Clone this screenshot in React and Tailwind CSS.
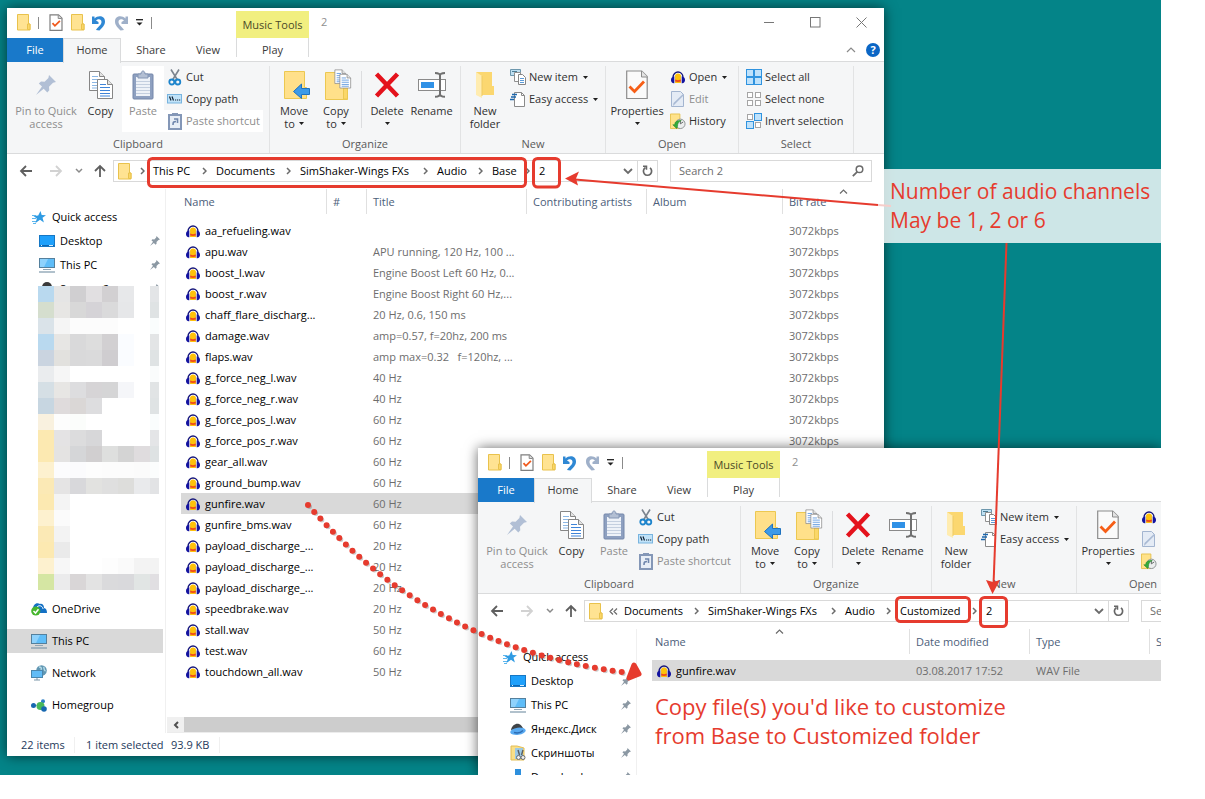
import React from 'react';

const baseFiles = [
  { name: 'aa_refueling.wav', title: '' },
  { name: 'apu.wav', title: 'APU running, 120 Hz, 100 ...' },
  { name: 'boost_l.wav', title: 'Engine Boost Left 60 Hz, 0...' },
  { name: 'boost_r.wav', title: 'Engine Boost Right 60 Hz,...' },
  { name: 'chaff_flare_discharg...', title: '20 Hz, 0.6, 150 ms' },
  { name: 'damage.wav', title: 'amp=0.57, f=20hz, 200 ms' },
  { name: 'flaps.wav', title: 'amp max=0.32   f=120hz, ...' },
  { name: 'g_force_neg_l.wav', title: '40 Hz' },
  { name: 'g_force_neg_r.wav', title: '40 Hz' },
  { name: 'g_force_pos_l.wav', title: '60 Hz' },
  { name: 'g_force_pos_r.wav', title: '60 Hz' },
  { name: 'gear_all.wav', title: '60 Hz' },
  { name: 'ground_bump.wav', title: '60 Hz' },
  { name: 'gunfire.wav', title: '60 Hz', selected: true },
  { name: 'gunfire_bms.wav', title: '60 Hz' },
  { name: 'payload_discharge_...', title: '20 Hz' },
  { name: 'payload_discharge_...', title: '20 Hz' },
  { name: 'payload_discharge_...', title: '20 Hz' },
  { name: 'speedbrake.wav', title: '20 Hz' },
  { name: 'stall.wav', title: '50 Hz' },
  { name: 'test.wav', title: '60 Hz' },
  { name: 'touchdown_all.wav', title: '50 Hz' },
];

// rows beyond this one sit behind the second window
const lastVisibleRate = 11;

const W = '#ffffff';
const mosaic = [
  ['#b9d9ef', '#e5e5e5', '#d0cfd1', '#e1dfe1', '#d2d0d2', '#e7e8ea', W, '#e3e5e7'],
  ['#d5dece', '#e7e6e4', '#d8d8d8', '#d5d3d7', '#dadadb', '#e6e7e9', W, '#dfe3e4'],
  ['#dae3e9', '#f5f5f5', '#fcfcfc', '#fcfcfc', '#fcfcfc', W, W, '#fafdfd'],
  ['#b9d9ef', '#e7e6e4', '#d9d9da', '#dddddd', '#d2d0d2', '#fafcff', W, '#e3e5e6'],
  ['#cad4e0', '#e2e1de', '#d9d9da', '#dadadb', '#cfcdd0', '#fafcff', W, '#dfe3e4'],
  ['#eaecee', '#f6f6f6', W, W, W, W, W, '#fafcfc'],
  ['#d5dfe5', '#e7e6e4', '#dddddf', '#d6d4d6', '#d5d5d6', '#f5f6f9', W, '#e1e4e5'],
  ['#c7d6e1', '#dfdbdc', '#dad7d6', '#dddddf', W, W, W, '#dfe3e4'],
  ['#f9f1df', '#fdfdfd', '#fbfdfb', W, W, W, W, '#fafdfd'],
  ['#fce9b1', '#e4e3e4', '#dcdcdd', '#d7d7d9', W, W, W, '#e4e5e7'],
  ['#fce9b1', '#e4e3e2', '#d5d6d8', '#d1cfd0', '#dedfde', '#d4d4d4', '#dfdcde', '#dee2e3'],
  ['#fdf1cf', '#fcfcfd', '#fbfbfd', '#fdfdfd', '#fcfcfc', '#fcfcfc', '#fbfbfb', '#fbfdfd'],
  ['#fbe9b5', '#e5e4e4', '#d8d8db', '#e2e2e0', '#dfdfdf', '#dddddb', '#e9eaec', '#e2e3e5'],
  ['#fce9b1', '#f4f4f4', W, W, W, W, W, W],
  ['#fdf1cf', '#fbfbfb', W, W, W, W, W, W],
  ['#fbe9b5', '#f3f3f3', W, W, W, W, W, W],
  ['#fce9b1', '#eaeaea', W, W, W, W, W, W],
  ['#fdf1cf', '#f7f7f7', W, W, '#fdfdfd', '#fafafa', '#f3f3f3', '#f3f3f3'],
  ['#d5e6a3', '#ebebec', '#d9d6d7', '#e3e3e3', '#dadadc', '#d9d9dc', '#e1e5e4', '#e1dfe2'],
];

/* ---------- icons ---------- */

const FolderTiny = () => (
  <svg width="14" height="17" viewBox="0 0 14 17">
    <path d="M.5.5h11v9.5h1.5v6H.5z" fill="#ffe392" stroke="#e9c24c" />
    <path d="M10.5 15.5V10h2.500v5.500z" fill="#fbd768" stroke="#e9c24c" />
  </svg>
);

const CheckDocTiny = () => (
  <svg width="14" height="17" viewBox="0 0 14 17">
    <path d="M1 .8h8.500l3.500 3.500v12H1z" fill="#fff" stroke="#7f7f7f" strokeWidth="1.200" />
    <path d="M9.200 1v3.500h3.500" fill="#ddd" stroke="#8a8a8a" />
    <path d="M3.500 9.200l2.400 2.600 5-5" fill="none" stroke="#f0591c" strokeWidth="1.800" />
  </svg>
);

const Undo = ({ color, flip }) => (
  <svg width="14" height="16" viewBox="0 0 14 16" className={flip ? '-scale-x-100' : ''}>
    <path d="M0 1.500h2.500v2C6 0 13 .5 13 6.500c0 4-3 6-5.500 9L4 15c2-3.500 5.500-5 5.500-8 0-3.500-3.500-3.500-5.500-1.500l2.500 1.500V9H0z" fill={color} />
  </svg>
);

const Caret = () => (
  <svg width="5" height="3" viewBox="0 0 5 3" className="shrink-0">
    <path d="M0 0h5L2.500 3z" fill="#1f1f1f" />
  </svg>
);

const PinShape = ({ size, color }) => (
  <svg width={size} height={size} viewBox="0 0 20 20" className="shrink-0">
    <path d="M13 0l7 7-3 .8-4 4 .3 3.400-2 2.200-3.600-3.600L0 20l6-8.400L2.800 8.400l2.200-2 3.600.4 3.800-3.800z" fill={color} />
  </svg>
);

const PageLines = ({ x, y, line }) => (
  <g transform={`translate(${x} ${y})`}>
    <path d="M.5.5h10l5 5v14H.5z" fill="#fff" stroke="#868686" />
    <path d="M10.500.5v5h5" fill="#e3e3e3" stroke="#868686" />
    <path d="M3 5.500h6M3 8.500h10M3 11.500h10M3 14.500h10M3 17h10" stroke={line} />
  </g>
);

const CopyBig = () => (
  <svg width="26" height="30" viewBox="0 0 26 30">
    <PageLines x={1} y={1} line="#8cb7e4" />
    <PageLines x={9} y={9} line="#3f84d8" />
  </svg>
);

const PasteBig = () => (
  <svg width="22" height="30" viewBox="0 0 22 30">
    <rect x="1" y="4" width="20" height="25" rx="1" fill="#8ea0c0" stroke="#7587aa" />
    <rect x="4" y="7" width="14" height="19" fill="#eef2f8" />
    <path d="M4 11.500h14M4 14.500h14M4 17.500h14M4 20.500h14M4 23.500h14" stroke="#c4cfdf" />
    <path d="M6 4h3c0-4 4-4 4 0h3v4H6z" fill="#b3bfd3" stroke="#8496b4" />
  </svg>
);

const Scissors = () => (
  <svg width="14" height="17" viewBox="0 0 14 17">
    <path d="M3 .5L9.500 11M11 .5L4.500 11" stroke="#7c858f" strokeWidth="1.600" />
    <circle cx="3.800" cy="13" r="2.500" fill="none" stroke="#1d84cc" strokeWidth="1.800" />
    <circle cx="9.800" cy="13" r="2.500" fill="none" stroke="#1d84cc" strokeWidth="1.800" />
  </svg>
);

const CopyPath = () => (
  <svg width="16" height="10" viewBox="0 0 16 10">
    <rect x=".5" y=".5" width="14" height="8.500" fill="#c0e2f8" stroke="#78b4df" />
    <path d="M2.500 2.500l1.500 4M5 2.500l1.500 4" stroke="#123" strokeWidth="1.200" />
    <path d="M8 6h1.200M10 6h1.200M12 6h1.200" stroke="#123" strokeWidth="1.200" />
  </svg>
);

const PasteShortcut = () => (
  <svg width="14" height="17" viewBox="0 0 14 17">
    <rect x="1" y="2" width="12" height="14" fill="#e8eef6" stroke="#8497b7" strokeWidth="2" />
    <rect x="4" y="0" width="6" height="3" fill="#8497b7" />
    <path d="M5 12c0-3 .5-3.500 3-3.500M6 6h3.500v4" fill="none" stroke="#6f86ac" strokeWidth="1.600" />
  </svg>
);

const MoveTo = () => (
  <svg width="27" height="30" viewBox="0 0 27 30">
    <path d="M1.500 1.500h20v16h2v11h-22z" fill="#ffe08a" stroke="#ecc851" />
    <path d="M26.500 18.500v6h-8v4l-8-7 8-7.500v4.500z" fill="#3c9ae8" stroke="#1f72bf" />
  </svg>
);

const CopyTo = () => (
  <svg width="28" height="32" viewBox="0 0 28 32">
    <path d="M1.500 3.500h18v17h4v10h-22z" fill="#ffe08a" stroke="#ecc851" />
    <path d="M19.500 30V19h4v11z" fill="#fbd768" stroke="#ecc851" />
    <g transform="translate(10.500 .5) scale(.72)"><PageLines x={0} y={0} line="#3f84d8" /></g>
    <g transform="translate(15.500 5) scale(.72)"><PageLines x={0} y={0} line="#3f84d8" /></g>
  </svg>
);

const DeleteBig = () => (
  <svg width="26" height="26" viewBox="0 0 26 26">
    <path d="M2.500 2l21 22M23.500 2l-21 22" stroke="#e4121c" strokeWidth="4.500" />
  </svg>
);

const RenameBig = () => (
  <svg width="28" height="28" viewBox="0 0 28 28">
    <rect x=".5" y="8.500" width="27" height="11" fill="#fff" stroke="#8a8a8a" />
    <rect x="3" y="11" width="13" height="6" fill="#3091e6" />
    <path d="M17 2c3 0 5 .5 5 2.500V23c0 2-2 2.800-5 2.800M27 2c-3 0-5 .5-5 2.500V23c0 2 2 2.800 5 2.800" fill="none" stroke="#707070" strokeWidth="2" />
  </svg>
);

const NewFolderBig = () => (
  <svg width="20" height="28" viewBox="0 0 20 28">
    <path d="M1 1h16v14h2v9H6z" fill="#fbd770" />
    <path d="M1 1l6 4v22l-6-3z" fill="#ffecb0" />
    <path d="M7 5v20" stroke="#efcb62" />
  </svg>
);

const NewItem = () => (
  <svg width="16" height="16" viewBox="0 0 16 16">
    <path d="M.5.5h10v6H.5z" fill="#bfe0f2" stroke="#6d97ad" />
    <path d="M2 2.500h5" stroke="#4b7d96" />
    <path d="M4.500 3.500h6v9h-6z" fill="#fff" stroke="#909090" />
    <path d="M8.500 5.500h4l3 3v7h-7z" fill="#fff" stroke="#868686" />
    <path d="M10 9.500h4M10 11.500h4M10 13.500h4" stroke="#5c9bd8" />
  </svg>
);

const EasyAccess = () => (
  <svg width="16" height="16" viewBox="0 0 16 16">
    <path d="M4.500 1.500h7l3 3v11h-10z" fill="#fff" stroke="#8a8a8a" />
    <path d="M11.500 1.500v3h3" fill="none" stroke="#8a8a8a" />
    <path d="M2 3.500h5M1 6h5M0 8.500h4" stroke="#1c67ad" strokeWidth="1.300" />
  </svg>
);

const PropertiesBig = () => (
  <svg width="22" height="30" viewBox="0 0 22 30">
    <path d="M.7 1h15l5.500 5.500V28.500H.7z" fill="#fafafa" stroke="#8c8c8c" strokeWidth="1.200" />
    <path d="M15.500 1v6h6" fill="#e3e3e3" stroke="#8c8c8c" />
    <path d="M3.500 16.500l5 5 9.500-10" fill="none" stroke="#f65e16" strokeWidth="2.800" />
  </svg>
);

const Audacity = () => (
  <svg width="14" height="13" viewBox="0 0 14 13" className="shrink-0">
    <path d="M4 12V5c0-1.500 1.300-2.500 3-2.500S10 3.500 10 5v7z" fill="#ffc20a" />
    <path d="M4 8.500l3 .7 3-.7v2l-3 .5-3-.5z" fill="#f04a18" />
    <path d="M2 6.500C2-.8 12-.8 12 6.500" fill="none" stroke="#15157a" strokeWidth="1.400" />
    <path d="M3.300 5.500v6.800C1.200 12.600 0 11 0 9s1.200-3.500 3.300-3.500z" fill="#1313a0" />
    <path d="M10.700 5.500v6.800C12.800 12.600 14 11 14 9s-1.200-3.500-3.300-3.500z" fill="#1313a0" />
    <path d="M3.700 5.500V12M10.300 5.500V12" stroke="#b9b3c9" strokeWidth=".8" />
  </svg>
);

const EditIcon = () => (
  <svg width="14" height="16" viewBox="0 0 14 16">
    <path d="M.5.500h9l3 3v12H.5z" fill="#e4ebf5" stroke="#a3b5d0" />
    <path d="M13 4L4 13l-2 2 .5-3L12 3z" fill="#a9bad4" />
  </svg>
);

const HistoryIcon = () => (
  <svg width="17" height="17" viewBox="0 0 17 17">
    <path d="M.5.5h10V16H.5z" fill="#ffe28a" stroke="#e5c14f" />
    <circle cx="11" cy="11" r="5" fill="#eceeee" stroke="#8b9192" />
    <path d="M11 8v3l3-2" fill="none" stroke="#5d6262" />
    <path d="M3 12l4 4 1-2.500c0-3 1-4.500 4-6-4-.5-7 1-7 4.500z" fill="#35ab3a" stroke="#1d8526" strokeWidth=".6" />
  </svg>
);

const GridIcon = ({ on }) => (
  <svg width="16" height="16" viewBox="0 0 16 16">
    {[[0, 0], [8, 0], [0, 8], [8, 8]].map(([x, y], i) =>
      on[i] ? (
        <rect key={i} x={x + 0.5} y={y + 0.5} width="7" height="7" fill="#bfe2fb" stroke="#2f93df" />
      ) : (
        <rect key={i} x={x + 1.5} y={y + 1.5} width="5" height="5" fill="#fff" stroke="#a5a5a5" />
      )
    )}
  </svg>
);

const Chevron = ({ d = 'M1 1l3 3-3 3', w = 6, h = 8, color = '#6b6b6b', sw = 1.5 }) => (
  <svg width={w} height={h} viewBox={`0 0 ${w} ${h}`} className="shrink-0">
    <path d={d} fill="none" stroke={color} strokeWidth={sw} />
  </svg>
);

const Arrow = ({ color, up }) => (
  <svg width="14" height="14" viewBox="0 0 14 14" className={up ? 'rotate-90' : ''}>
    <path d="M13 7H2M7 2L2 7l5 5" fill="none" stroke={color} strokeWidth="1.800" />
  </svg>
);

const Refresh = () => (
  <svg width="11" height="12" viewBox="0 0 11 12">
    <path d="M3.500 2.600A4.100 4.100 0 1 0 8 2.900" fill="none" stroke="#666" strokeWidth="1.700" />
    <path d="M1 1.200h3.500v3.600" fill="none" stroke="#666" strokeWidth="1.500" />
  </svg>
);

const SearchIcon = () => (
  <svg width="12" height="12" viewBox="0 0 12 12">
    <circle cx="7.500" cy="4.300" r="3.300" fill="none" stroke="#6b6b6b" strokeWidth="1.500" />
    <path d="M5.200 6.800L.8 11.200" stroke="#6b6b6b" strokeWidth="1.800" />
  </svg>
);

const StarIcon = () => (
  <svg width="14" height="13" viewBox="0 0 14 13">
    <path d="M8.500 0l1.200 4 4.300.2-3.500 2.600 1.400 4.700L8 8.800 3.500 12l1.300-4.500L1.500 5l4.700-.4z" fill="#2f9be3" />
    <path d="M0 4.500h4M0 7.500h4M0 10.500h4M1 12.500h3" stroke="#5cb6ee" />
  </svg>
);

const DesktopIcon = () => (
  <svg width="16" height="12" viewBox="0 0 16 12">
    <rect x=".5" y=".5" width="15" height="11" fill="#1ea0fb" stroke="#1677c4" />
    <path d="M1 10.500h14" stroke="#0d66b2" />
    <path d="M2 10.500h1M10 10.500h4" stroke="#d5ecfc" />
  </svg>
);

const MonitorIcon = () => (
  <svg width="16" height="15" viewBox="0 0 16 15">
    <rect x=".5" y=".5" width="15" height="9" fill="#5fbdf8" stroke="#54809d" />
    <path d="M1 1h8L5 9H1z" fill="#8ed2fc" />
    <path d="M4 11.500h8" stroke="#8fa5b4" />
    <path d="M0 14h16" stroke="#7e98ab" strokeWidth="1.200" />
  </svg>
);

const YandexDisk = () => (
  <svg width="16" height="13" viewBox="0 0 16 13">
    <path d="M1 7C2 2 6 0 9 1c2 .6 3.500 3 4.500 5z" fill="#3f4347" />
    <ellipse cx="8" cy="8.300" rx="7.800" ry="3.600" transform="rotate(-8 8 8.300)" fill="#59aaf1" />
    <path d="M4 9.500c3 .8 7 0 9-2" fill="none" stroke="#2e6db3" strokeWidth="1.400" />
  </svg>
);

const ScreenshotsIcon = () => (
  <svg width="16" height="16" viewBox="0 0 16 16">
    <path d="M1 1h6l7 2v12H1z" fill="#fadf87" stroke="#e2bd55" />
    <path d="M5 3h8v11H5z" fill="#9cc9e4" />
    <path d="M8 5l1.500 5M13 5l-1.500 5" stroke="#5c5f62" strokeWidth="1.400" />
    <circle cx="8.500" cy="12.500" r="2" fill="#eee" stroke="#6a6d70" />
    <circle cx="13" cy="12.500" r="2" fill="#eee" stroke="#6a6d70" />
  </svg>
);

const DownloadsIcon = () => (
  <svg width="16" height="16" viewBox="0 0 16 16">
    <path d="M5 0h6v7h4l-7 8-7-8h4z" fill="#2d8fdd" />
  </svg>
);

const HiddenIcon = () => (
  <svg width="16" height="16" viewBox="0 0 16 16">
    <circle cx="8" cy="6" r="5" fill="#3a3a3a" />
  </svg>
);

const OneDriveIcon = () => (
  <svg width="16" height="14" viewBox="0 0 16 14">
    <path d="M2 7c0-4 3-7 7-5 3-1 4 2 4 4 2 .5 3 2 3 5H5z" fill="#1370c4" />
    <path d="M6 5c3-3 6 0 6 2" fill="none" stroke="#fff" />
    <circle cx="4.800" cy="9" r="4.600" fill="#46b62e" />
    <path d="M2.500 9l2 2 3-3.800" fill="none" stroke="#fff" strokeWidth="1.500" />
  </svg>
);

const NetworkIcon = () => (
  <svg width="16" height="16" viewBox="0 0 16 16">
    <circle cx="10.500" cy="5.500" r="5.300" fill="#6197b3" />
    <path d="M8 2c2 0 3 1 2 3M12.500 2c1 1 0 3 2 4" stroke="#b5dbe8" strokeWidth="1.400" fill="none" />
    <rect x=".5" y="5.500" width="11" height="7" fill="#62bcf6" stroke="#4b86ac" />
    <path d="M3 15h6M6 13v2" stroke="#7d97aa" />
  </svg>
);

const HomegroupIcon = () => (
  <svg width="16" height="13" viewBox="0 0 16 13">
    <path d="M2.500 6.500h7l3-4M10 7l3 3" stroke="#8fb9d8" fill="none" />
    <circle cx="2.500" cy="6.500" r="2.500" fill="#1768b0" />
    <circle cx="12" cy="2.200" r="2" fill="#2c7fc6" />
    <circle cx="9.500" cy="7" r="4" fill="#48b85a" />
    <circle cx="13" cy="10" r="2.800" fill="#1768b0" />
  </svg>
);

/* ---------- ribbon ---------- */

const BigButton = ({ icon, lines, width, caret, disabled, className = '' }) => (
  <button disabled={disabled} className={`flex h-[66px] flex-col items-center ${width} ${disabled ? 'text-[#8d8d8d]' : 'text-[#303030]'} ${className}`}>
    <span className="flex h-[38px] items-center justify-center">{icon}</span>
    <span className="block whitespace-nowrap leading-[13px]">{lines[0]}</span>
    <span className="flex h-[13px] items-center gap-1 whitespace-nowrap leading-[13px]">
      {lines[1]}
      {caret && <Caret />}
    </span>
  </button>
);

const SmallButton = ({ icon, label, caret, disabled, hideLabel, className = '' }) => (
  <button
    disabled={disabled}
    aria-label={label}
    className={`flex h-[22px] items-center gap-[3px] whitespace-nowrap px-[3px] ${disabled ? 'text-[#8d8d8d]' : 'text-[#303030]'} ${className}`}
  >
    <span className="flex w-4 shrink-0 justify-center">{icon}</span>
    {!hideLabel && <span>{label}</span>}
    {caret && !hideLabel && <span className="ml-[2px]"><Caret /></span>}
  </button>
);

const Group = ({ label, width, children }) => (
  <div className={`flex shrink-0 flex-col ${width}`}>
    <div className="flex h-[87px] flex-col border-r border-[#e2e3e4]">
      <div className="flex h-[67px]">{children}</div>
      <div className="pt-[3px] text-center leading-4 text-[#5a5a5a]">{label}</div>
    </div>
  </div>
);

const Ribbon = ({ partial }) => {
  const hot = partial ? '' : 'bg-white';
  return (
    <div className="flex h-[92px] shrink-0 border-b border-[#dadbdc] bg-[#f5f6f7] pt-1">
      <Group label="Clipboard" width="w-[263px]">
        <BigButton icon={<PinShape size={20} color="#b1bfd5" />} lines={['Pin to Quick', 'access']} width="ml-[6px] w-[66px]" disabled />
        <BigButton icon={<CopyBig />} lines={['Copy']} width="w-[43px]" />
        <BigButton icon={<PasteBig />} lines={['Paste']} width="w-[42px]" disabled className={hot} />
        <div className="flex flex-col">
          <SmallButton icon={<Scissors />} label="Cut" />
          <SmallButton icon={<CopyPath />} label="Copy path" />
          <SmallButton icon={<PasteShortcut />} label="Paste shortcut" disabled className={hot} />
        </div>
      </Group>
      <Group label="Organize" width="w-[191px]">
        <BigButton icon={<span className="pl-1"><MoveTo /></span>} lines={['Move', 'to']} width="ml-[3px] w-[42px]" caret />
        <BigButton icon={<span className="pl-1"><CopyTo /></span>} lines={['Copy', 'to']} width="w-[42px]" caret />
        <div className="mx-1 my-[5px] w-px bg-[#dcdddf]" />
        <BigButton icon={<DeleteBig />} lines={['Delete']} width="w-[42px]" caret />
        <BigButton icon={<RenameBig />} lines={['Rename']} width="w-[47px]" />
      </Group>
      <Group label="New" width="w-[145px]">
        <BigButton icon={<NewFolderBig />} lines={['New', 'folder']} width="ml-[2px] w-[44px]" />
        <div className="flex flex-col">
          <SmallButton icon={<NewItem />} label="New item" caret />
          <SmallButton icon={<EasyAccess />} label="Easy access" caret />
        </div>
      </Group>
      <Group label="Open" width="w-[133px]">
        <BigButton icon={<PropertiesBig />} lines={['Properties']} width="ml-px w-[60px]" caret />
        <div className="flex flex-col">
          <SmallButton icon={<Audacity />} label="Open" caret hideLabel={partial} />
          <SmallButton icon={<EditIcon />} label="Edit" disabled hideLabel={partial} />
          <SmallButton icon={<HistoryIcon />} label="History" hideLabel={partial} />
        </div>
      </Group>
      {!partial && (
        <Group label="Select" width="w-[115px]">
          <div className="ml-1 flex flex-col">
            <SmallButton icon={<GridIcon on={[1, 1, 1, 1]} />} label="Select all" />
            <SmallButton icon={<GridIcon on={[0, 0, 0, 0]} />} label="Select none" />
            <SmallButton icon={<GridIcon on={[0, 1, 1, 0]} />} label="Invert selection" />
          </div>
        </Group>
      )}
    </div>
  );
};

/* ---------- window chrome ---------- */

const TitleBar = ({ partial }) => (
  <div className="flex h-[30px] shrink-0 items-start">
    <div className="flex h-[29px] w-[229px] shrink-0 items-center pl-[10px]">
      <FolderTiny />
      <span className="ml-[7px] h-3 w-px bg-[#8a8a8a]" />
      <button aria-label="Properties" className="ml-[10px]"><CheckDocTiny /></button>
      <button aria-label="New folder" className="ml-2"><FolderTiny /></button>
      <button aria-label="Undo" className="ml-[7px]"><Undo color="#2f88d4" /></button>
      <button aria-label="Redo" className="ml-2"><Undo color="#9fb0c9" flip /></button>
      <button aria-label="Customize toolbar" className="ml-2">
        <svg width="7" height="7" viewBox="0 0 7 7">
          <path d="M0 .7h7" stroke="#1f1f1f" strokeWidth="1.300" />
          <path d="M.5 3.500h6L3.500 6.500z" fill="#1f1f1f" />
        </svg>
      </button>
      <span className="ml-2 h-3 w-px bg-[#8a8a8a]" />
    </div>
    <div className="mt-[3px] h-[27px] w-[73px] shrink-0 bg-[#f1ef80] pt-[6px] text-center leading-4 text-[#4b4a28]">Music Tools</div>
    <div className="ml-3 pt-[6px] leading-4 text-[#8f8f8f]">2</div>
    {!partial && (
      <div className="ml-auto flex h-[29px] items-center gap-[35px] pr-[17px]">
        <button aria-label="Minimize">
          <svg width="11" height="11" viewBox="0 0 11 11"><path d="M0 5.500h10" stroke="#777" /></svg>
        </button>
        <button aria-label="Maximize">
          <svg width="11" height="11" viewBox="0 0 11 11"><rect x=".5" y=".5" width="9.500" height="9.500" fill="none" stroke="#777" /></svg>
        </button>
        <button aria-label="Close">
          <svg width="11" height="11" viewBox="0 0 11 11"><path d="M.5.5l10 10M10.500.5l-10 10" stroke="#777" /></svg>
        </button>
      </div>
    )}
  </div>
);

const Tabs = ({ partial }) => (
  <div className="flex h-6 shrink-0 text-[#3a3a3a]">
    <button className="w-14 shrink-0 bg-[#1979ca] text-white">File</button>
    <button className="z-10 -mb-px w-[58px] shrink-0 border-x border-t border-[#dadbdc] bg-[#f5f6f7] pb-px">Home</button>
    <div className="flex flex-1 border-b border-[#dadbdc]">
      <button className="w-[60px] shrink-0 pt-px">Share</button>
      <button className="w-[54px] shrink-0 pt-px">View</button>
      <button className="ml-px mb-1 w-[73px] shrink-0 border-x border-[#dadbdc] pt-1">Play</button>
      {!partial && (
        <div className="ml-auto flex items-center gap-[10px] pr-1">
          <button aria-label="Minimize ribbon"><Chevron w={10} h={6} d="M1 5l4-4 4 4" color="#8a8a8a" sw={1.2} /></button>
          <button aria-label="Help" className="flex size-[14px] items-center justify-center rounded-full bg-[#0b66c5] text-[11px] font-bold leading-none text-white">?</button>
        </div>
      )}
    </div>
  </div>
);

const AddressBar = ({ crumbs, lead }) => (
  <div className="flex h-[35px] shrink-0 items-start pt-[6px]">
    <div className="flex h-[22px] w-[106px] shrink-0 items-center pl-[12px]">
      <button aria-label="Back"><Arrow color="#5f5f5f" /></button>
      <button aria-label="Forward" className="ml-4 -scale-x-100"><Arrow color="#d2d2d2" /></button>
      <button aria-label="Recent locations" className="ml-3"><Chevron w={8} h={6} d="M1 1l3 3 3-3" color="#8a8a8a" /></button>
      <button aria-label="Up" className="ml-[10px]"><Arrow color="#5f5f5f" up /></button>
    </div>
    <div className="flex h-[22px] w-[545px] shrink-0 items-center border border-[#d9d9d9] bg-white">
      <span className="ml-1"><FolderTiny /></span>
      <span className="flex w-[21px] justify-center">{lead}</span>
      {crumbs.map((c, i) => (
        <React.Fragment key={c.name}>
          <button className={`shrink-0 whitespace-nowrap text-left text-black ${c.width}`}>{c.name}</button>
          {i < crumbs.length - 1 && (
            <span className="flex w-[23px] shrink-0 justify-center"><Chevron w={5} h={8} d="M1 1l3 3-3 3" /></span>
          )}
        </React.Fragment>
      ))}
      <button aria-label="Previous locations" className="ml-auto mr-1"><Chevron w={10} h={7} d="M1 1l4 4 4-4" sw={1.8} /></button>
      <button aria-label="Refresh" className="flex h-full w-5 items-center justify-center border-l border-[#d9d9d9]"><Refresh /></button>
    </div>
    <label className="ml-3 flex h-[22px] w-[202px] shrink-0 items-center border border-[#d9d9d9] bg-white pl-2 pr-[7px]">
      <input aria-label="Search" placeholder="Search 2" className="min-w-0 flex-1 outline-none placeholder:text-[#6d6d6d]" />
      <SearchIcon />
    </label>
  </div>
);

const NavItem = ({ icon, label, root, pinned, selected }) => (
  <a href="#nav" className={`flex h-6 items-center text-black ${root ? 'pl-6' : 'pl-8'} ${selected ? 'mr-[2px] bg-[#d9d9d9]' : ''}`}>
    <span className="flex w-4 shrink-0 justify-center">{icon}</span>
    <span className="ml-[5px] flex-1 whitespace-nowrap">{label}</span>
    {pinned && <span className="mr-[5px]"><PinShape size={10} color="#8b98a3" /></span>}
  </a>
);

const Sidebar = ({ children }) => (
  <nav className="w-[159px] shrink-0 border-r border-[#f0f0f0] pt-4">
    <NavItem icon={<StarIcon />} label="Quick access" root />
    <NavItem icon={<DesktopIcon />} label="Desktop" pinned />
    <NavItem icon={<MonitorIcon />} label="This PC" pinned />
    {children}
  </nav>
);

const FileTable = ({ columns, rows }) => (
  <table className="ml-[15px] w-[calc(100%-15px)] table-fixed border-collapse text-left">
    <thead>
      <tr className="h-[31px] align-top text-[#4c607a]">
        {columns.map((c, i) => (
          <th key={c.label} className={`overflow-hidden p-0 font-normal ${c.width}`}>
            <div className={`relative flex h-[25px] items-center whitespace-nowrap pt-px ${i === 0 ? 'pl-[3px]' : 'border-l border-[#e0e0e0] pl-[6px]'}`}>
              {c.label}
              {c.sorted && (
                <span className={`absolute top-0 ${c.sorted}`}><Chevron w={9} h={5} d="M1 4.500l3.500-3.500 3.500 3.500" color="#6b6b6b" sw={1.2} /></span>
              )}
            </div>
          </th>
        ))}
      </tr>
    </thead>
    <tbody>
      {rows.map((r, i) => (
        <tr key={i} className={`h-[21px] leading-4 ${r.selected ? 'bg-[#d9d9d9]' : ''}`}>
          <td className="p-0 pt-px">
            <div className="flex items-center gap-[5px] whitespace-nowrap pl-[5px] text-black">
              <Audacity />
              {r.name}
            </div>
          </td>
          {r.cells.map((cell, j) => (
            <td key={j} className="whitespace-pre p-0 pl-[7px] pt-px text-[#6d6d6d]">{cell}</td>
          ))}
        </tr>
      ))}
    </tbody>
  </table>
);

const Window = ({ partial, className, crumbs, lead, children }) => (
  <section className={`absolute flex flex-col bg-white shadow-[0_0_12px_rgba(0,0,0,0.6)] ${className}`}>
    <TitleBar partial={partial} />
    <Tabs partial={partial} />
    <Ribbon partial={partial} />
    <AddressBar crumbs={crumbs} lead={lead} />
    {children}
  </section>
);

const BaseWindow = () => (
  <Window
    className="left-[7px] top-2 w-[877px]"
    lead={<Chevron w={5} h={8} />}
    crumbs={[
      { name: 'This PC', width: 'w-10' },
      { name: 'Documents', width: 'w-[61px]' },
      { name: 'SimShaker-Wings FXs', width: 'w-[114px]' },
      { name: 'Audio', width: 'w-8' },
      { name: 'Base', width: 'w-6' },
      { name: '2', width: 'w-2' },
    ]}
  >
    <div className="flex h-[544px]">
      <Sidebar>
        <div className="h-[9px] overflow-hidden">
          <NavItem icon={<HiddenIcon />} label="Screens 2" pinned />
        </div>
        <div className="ml-[31px] grid w-[121px] grid-cols-[repeat(7,16px)_9px]">
          {mosaic.flat().map((color, i) => (
            <span key={i} className="h-4" style={{ backgroundColor: color }} />
          ))}
        </div>
        <div className="flex flex-col gap-2 pt-[7px]">
          <NavItem icon={<OneDriveIcon />} label="OneDrive" root />
          <NavItem icon={<MonitorIcon />} label="This PC" root selected />
          <NavItem icon={<NetworkIcon />} label="Network" root />
          <NavItem icon={<HomegroupIcon />} label="Homegroup" root />
        </div>
      </Sidebar>
      <div className="flex min-w-0 flex-1 flex-col justify-between">
        <FileTable
          columns={[
            { label: 'Name', width: 'w-[145px]' },
            { label: '#', width: 'w-10' },
            { label: 'Title', width: 'w-40' },
            { label: 'Contributing artists', width: 'w-[120px]' },
            { label: 'Album', width: 'w-[136px]' },
            { label: 'Bit rate', sorted: 'left-14' },
          ]}
          rows={baseFiles.map((f, i) => ({
            ...f,
            cells: ['', f.title, '', '', i < lastVisibleRate ? '3072kbps' : ''],
          }))}
        />
        <div className="ml-px flex h-4 border-b border-[#ececec] bg-[#cdcdcd]">
          <button aria-label="Scroll left" className="flex w-[17px] items-center justify-center bg-[#f0f0f0]">
            <Chevron w={6} h={8} d="M5 1L2 4l3 3" color="#505050" sw={2} />
          </button>
        </div>
      </div>
    </div>
    <footer className="flex h-[23px] items-center pt-px text-[#1e395b]">
      <span className="w-[68px] border-r border-[#f0f0f0] pl-[14px]">22 items</span>
      <span className="ml-[11px] w-[85px] whitespace-nowrap">1 item selected</span>
      <span className="border-r border-[#f0f0f0] pr-[10px]">93.9 KB</span>
    </footer>
  </Window>
);

const CustomizedWindow = () => (
  <Window
    partial
    className="bottom-0 left-[478px] right-0 top-[448px] overflow-hidden"
    lead={
      <svg width="9" height="7" viewBox="0 0 9 7">
        <path d="M4 .5l-3 3 3 3M8 .5l-3 3 3 3" fill="none" stroke="#6b6b6b" strokeWidth="1.200" />
      </svg>
    }
    crumbs={[
      { name: 'Documents', width: 'w-[61px]' },
      { name: 'SimShaker-Wings FXs', width: 'w-[114px]' },
      { name: 'Audio', width: 'w-8' },
      { name: 'Customized', width: 'w-[63px]' },
      { name: '2', width: 'w-2' },
    ]}
  >
    <div className="flex shrink-0">
      <Sidebar>
        <NavItem icon={<YandexDisk />} label="Яндекс.Диск" pinned />
        <NavItem icon={<ScreenshotsIcon />} label="Скриншоты" pinned />
        <NavItem icon={<DownloadsIcon />} label="Downloads" pinned />
      </Sidebar>
      <div className="min-w-0 flex-1">
        <FileTable
          columns={[
            { label: 'Name', width: 'w-[257px]', sorted: 'left-[123px]' },
            { label: 'Date modified', width: 'w-[120px]' },
            { label: 'Type', width: 'w-[120px]' },
            { label: 'Size' },
          ]}
          rows={[{ name: 'gunfire.wav', selected: true, cells: ['03.08.2017 17:52', 'WAV File', ''] }]}
        />
      </div>
    </div>
  </Window>
);

/* ---------- callouts drawn over both windows ---------- */

const curve = 'M308 505C350 552 385 582 432 609S540 662 630 673';

const Callouts = () => (
  <>
    <div className="absolute left-[884px] right-0 top-[169px] bg-white/80 py-2 pl-[6px]">
      <p className="whitespace-nowrap font-['Comic_Sans_MS','Open_Sans',sans-serif] text-[21px] leading-[29px] text-[#e63b2e]">
        Number of audio channels
        <br />
        May be 1, 2 or 6
      </p>
    </div>
    <p className="absolute left-[655px] top-[692px] whitespace-nowrap font-['Comic_Sans_MS','Open_Sans',sans-serif] text-[22px] leading-[29px] text-[#e63b2e]">
      Copy file(s) you'd like to customize
      <br />
      from Base to Customized folder
    </p>
    <svg className="pointer-events-none absolute left-0 top-0 h-full w-full" fill="none" stroke="#e63b2e">
      <g strokeWidth="3">
        <rect x="148.500" y="158.500" width="377" height="28" rx="4" />
        <rect x="533.500" y="158.500" width="26" height="28.500" rx="4" />
        <rect x="896.500" y="597.500" width="73" height="24" rx="4" />
        <rect x="980.500" y="597.500" width="26" height="29" rx="4" />
      </g>
      <path d="M575 179.500L878 205" strokeWidth="2" />
      <path d="M878 205l13 1" stroke="#f6cdca" strokeWidth="2" />
      <path d="M565 178.500l14-7-3 7 2 7z" fill="#e63b2e" stroke="none" />
      <path d="M1006.500 243L993.500 585" strokeWidth="2" />
      <path d="M992.500 594l-6.500-14 7 2 7-2z" fill="#e63b2e" stroke="none" />
      <path d={curve} transform="translate(1.500 1.500)" stroke="#000" strokeOpacity=".2" strokeWidth="5" strokeLinecap="round" strokeDasharray="0 9.100" />
      <path d={curve} strokeWidth="6" strokeLinecap="round" strokeDasharray="0 9.100" />
      <path d="M634 665l5 9-10 4z" fill="#e63b2e" strokeWidth="5" strokeLinejoin="round" />
    </svg>
  </>
);

const App = () => (
  <main className="flex h-screen bg-white pb-6 pr-11 font-['Open_Sans','Noto_Sans',sans-serif] text-[11px]">
    <div className="relative flex-1 overflow-hidden bg-[#048488]">
      <BaseWindow />
      <CustomizedWindow />
      <Callouts />
    </div>
  </main>
);

export default App;
